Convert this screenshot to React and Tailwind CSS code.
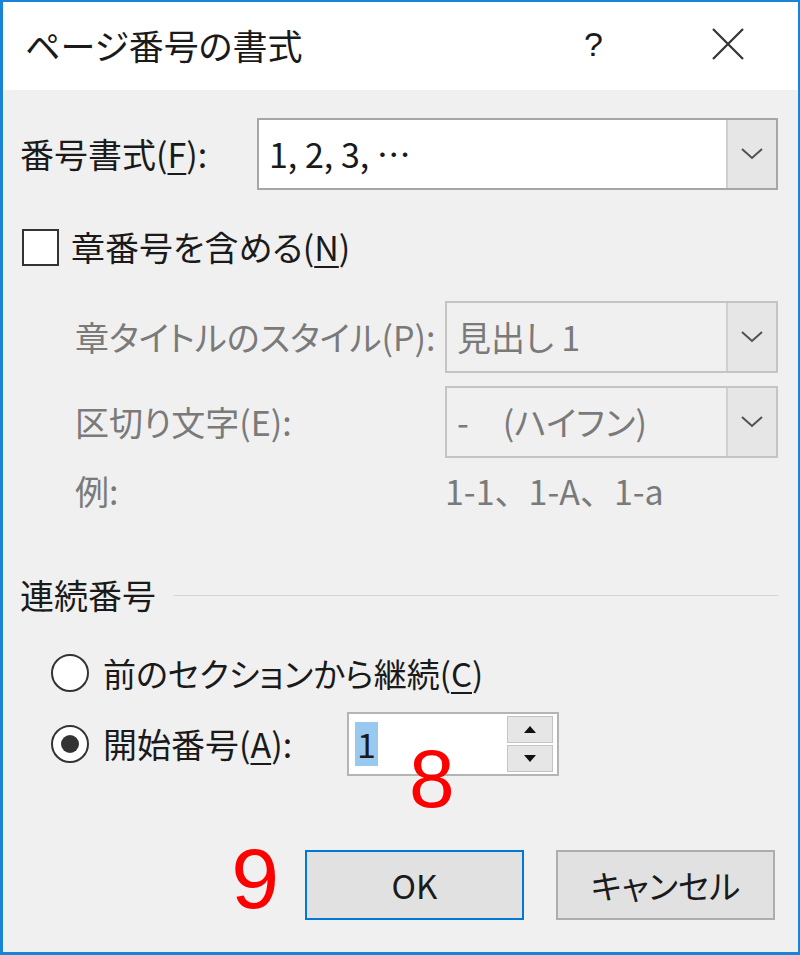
import React from "react";

const jp = "[font-family:'Noto_Sans_CJK_JP',sans-serif] [font-feature-settings:'palt']";

function Chevron() {
  return (
    <svg width="22" height="12" viewBox="0 0 22 12" fill="none">
      <path d="M1 1 L11 10 L21 1" stroke="#505050" strokeWidth="2" />
    </svg>
  );
}

function Dropdown({ value, disabled, className = "" }) {
  return (
    <div
      className={`flex h-[72px] items-stretch border-2 ${
        disabled ? "border-[#c4c4c4] bg-[#f0f0f0] text-[#7a7a7a]" : "border-[#a6a6a6] bg-white text-[#1a1a1a]"
      } ${className}`}
    >
      <div className="flex flex-1 items-center pl-[10px] text-[34px] leading-none">{value}</div>
      <div className="flex w-[50px] items-center justify-center border-l-2 border-[#cfcfcf] bg-[#e6e6e6]">
        <Chevron />
      </div>
    </div>
  );
}

function Underline({ children }) {
  return <span className="underline decoration-2 underline-offset-[5px]">{children}</span>;
}

export default function App() {
  return (
    <div
      className={`relative flex h-[955px] w-[800px] flex-col border-b-[3px] border-l-[3px] border-r-[2px] border-t-[2px] border-[#1883d7] bg-[#f0f0f0] text-[#1a1a1a] ${jp}`}
    >
      {/* タイトルバー */}
      <div className="flex h-[88px] items-center bg-white pb-[4px] pl-[22px]">
        <span className="flex-1 text-[35px] leading-none">ページ番号の書式</span>
        <span className="mr-[108px] text-[34px] leading-none [font-family:'Liberation_Sans',sans-serif]">?</span>
        <svg width="34" height="34" viewBox="0 0 34 34" className="mr-[53px]">
          <path d="M2 2 L32 32 M32 2 L2 32" stroke="#333" strokeWidth="2.2" />
        </svg>
      </div>

      <div className="flex flex-1 flex-col pl-[17px] pr-[20px]">
        {/* 番号書式 */}
        <div className="mt-[28px] flex items-center">
          <span className="w-[237px] text-[34px] leading-none">
            番号書式(<Underline>F</Underline>):
          </span>
          <Dropdown value="1, 2, 3, …" className="flex-1" />
        </div>

        {/* 章番号 */}
        <div className="mt-[38px] flex h-[38px] items-center">
          <div className="ml-[2px] h-[37px] w-[37px] border-2 border-[#333] bg-white" />
          <span className="ml-[12px] text-[34px] leading-none">
            章番号を含める(<Underline>N</Underline>)
          </span>
        </div>

        <div className="mt-[35px] flex items-center text-[#7a7a7a]">
          <span className="ml-[55px] w-[370px] text-[34px] leading-none">章タイトルのスタイル(P):</span>
          <Dropdown value="見出し 1" disabled className="flex-1" />
        </div>

        <div className="mt-[13px] flex items-center text-[#7a7a7a]">
          <span className="ml-[55px] w-[370px] text-[34px] leading-none">区切り文字(E):</span>
          <Dropdown value={"-　(ハイフン)"} disabled className="flex-1" />
        </div>

        <div className="mt-[16px] flex items-center text-[#7a7a7a]">
          <span className="ml-[55px] w-[370px] text-[34px] leading-none">例:</span>
          <span className="text-[34px] leading-none [font-feature-settings:normal]">1-1、1-A、1-a</span>
        </div>

        {/* 連続番号 */}
        <div className="mt-[70px] flex items-center">
          <span className="text-[34px] leading-none">連続番号</span>
          <div className="ml-[18px] h-px flex-1 bg-[#d4d4d4]" />
        </div>

        <div className="mt-[42px] flex items-center">
          <div className="ml-[31px] h-[38px] w-[38px] rounded-full border-2 border-[#333] bg-white" />
          <span className="ml-[14px] text-[33px] leading-none">
            前のセクションから継続(<Underline>C</Underline>)
          </span>
        </div>

        <div className="mt-[20px] flex items-center">
          <div className="ml-[31px] flex h-[38px] w-[38px] items-center justify-center rounded-full border-2 border-[#333] bg-white">
            <div className="h-[18px] w-[18px] rounded-full bg-[#333]" />
          </div>
          <span className="ml-[14px] w-[244px] text-[34px] leading-none">
            開始番号(<Underline>A</Underline>):
          </span>
          <div className="relative flex h-[64px] w-[212px] border-2 border-[#b4b4b4] bg-white">
            <div className="flex flex-1 items-center pl-[6px]">
              <span className="bg-[#99c9ef] px-[2px] text-[34px] leading-[44px]">1</span>
            </div>
            <div className="my-[2px] mr-[4px] flex w-[46px] flex-col gap-[2px]">
              <div className="flex flex-1 items-center justify-center border border-[#c4c4c4] bg-[#e6e6e6]">
                <svg width="12" height="7" viewBox="0 0 12 7"><path d="M6 0 L12 7 L0 7 Z" fill="#111" /></svg>
              </div>
              <div className="flex flex-1 items-center justify-center border border-[#c4c4c4] bg-[#e6e6e6]">
                <svg width="12" height="7" viewBox="0 0 12 7"><path d="M0 0 L12 0 L6 7 Z" fill="#111" /></svg>
              </div>
            </div>
            <span className="absolute left-[60px] top-[24px] text-[82px] leading-none text-[#ff0000] [font-family:'Liberation_Sans',sans-serif]">
              8
            </span>
          </div>
        </div>

        {/* ボタン */}
        <div className="mt-[73px] flex items-center justify-end gap-[32px] pr-[3px]">
          <span className="mr-[-6px] mt-[-14px] text-[86px] leading-none text-[#ff0000] [font-family:'Liberation_Sans',sans-serif]">9</span>
          <button className="h-[70px] w-[219px] border-2 border-[#0078d7] bg-[#e1e1e1] text-[33px] leading-none">OK</button>
          <button className="h-[70px] w-[219px] border-2 border-[#adadad] bg-[#e1e1e1] text-[33px] leading-none">キャンセル</button>
        </div>
      </div>
    </div>
  );
}
